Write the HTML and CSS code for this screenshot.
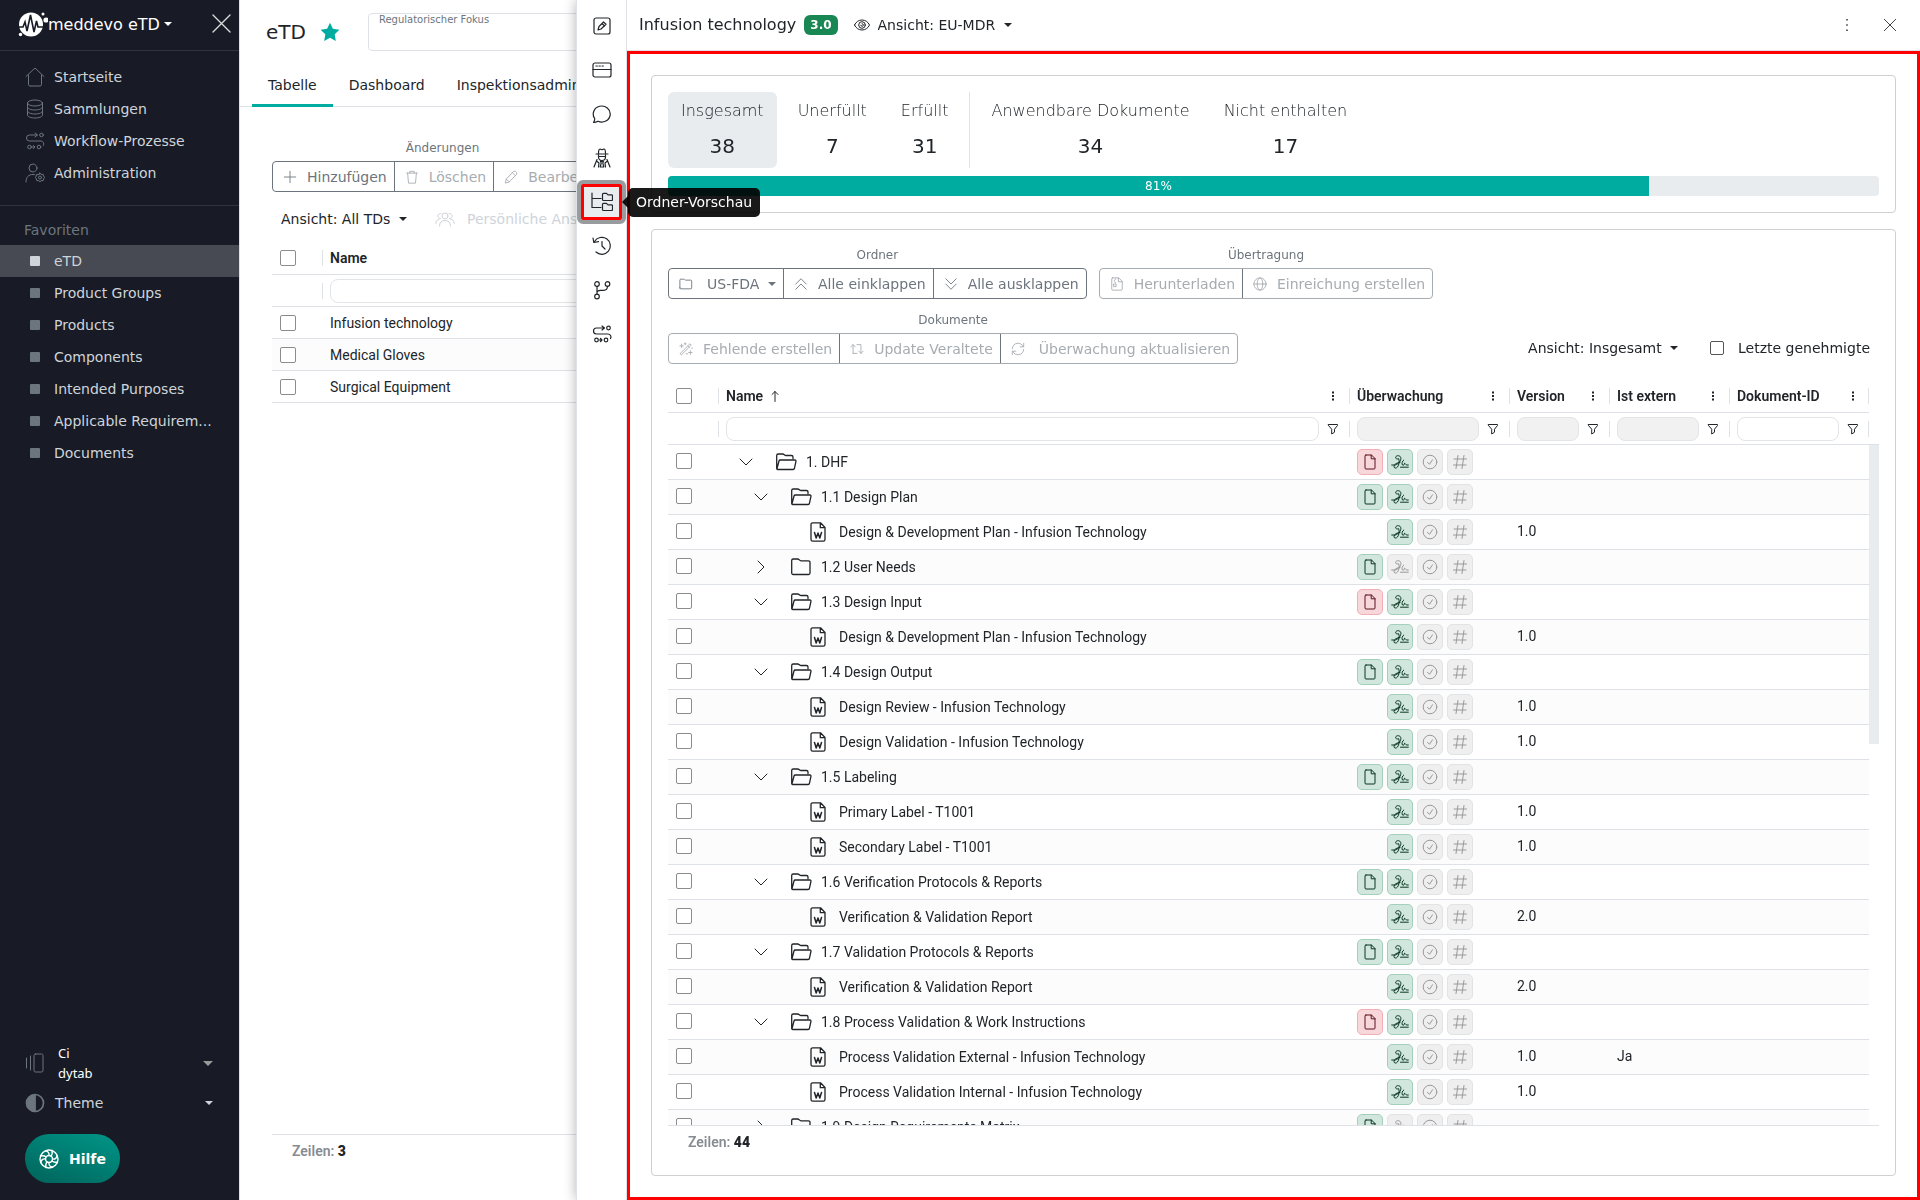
FILE: index.html
```html
<!DOCTYPE html>
<html lang="de">
<head>
    <meta charset="UTF-8">
    <meta name="viewport" content="width=device-width, initial-scale=1.0">
    <title>meddevo eTD</title>
    <link rel="stylesheet" href="styles.css">
</head>
<body>
    <!-- Icons -->
    <svg class="sprite" aria-hidden="true">
        <symbol id="home" viewBox="0 0 20 20"><path d="M1 9.500 10 1l9 8.500M3.500 8v9.500a1.500 1.500 0 0 0 1.500 1.500h10a1.500 1.500 0 0 0 1.500-1.500V8"/></symbol>
        <symbol id="database" viewBox="0 0 20 20"><ellipse cx="10" cy="4" rx="7.500" ry="3"/><path d="M2.500 4v12c0 1.700 3.400 3 7.500 3s7.500-1.300 7.500-3V4M2.500 8c0 1.700 3.400 3 7.500 3s7.500-1.300 7.500-3M2.500 12c0 1.700 3.400 3 7.500 3s7.500-1.300 7.500-3"/></symbol>
        <symbol id="flow" viewBox="0 0 20 20"><circle cx="16.500" cy="4" r="1.800"/><path d="M12 4H4.500a3 3 0 0 0 0 6H16a3 3 0 0 1 2.500 4.500M10 2l2.500 2L10 6M7 16h2.500M8.500 14.500 10 16l-1.500 1.500"/><circle cx="4.500" cy="16" r="1.800"/><circle cx="14" cy="16" r="1.800"/></symbol>
        <symbol id="admin" viewBox="0 0 20 20"><circle cx="8" cy="5" r="4"/><path d="M1 19c0-5 2.500-7.500 7-7.500 1 0 1.500.1 2 .3"/><circle cx="15" cy="14.500" r="1.500"/><path d="m15 10 1.200 1.500 2-.2.300 2L20 14.500l-1.500 1.200-.3 2-2-.2L15 19l-1.200-1.500-2 .2-.3-2-1.500-1.200 1.500-1.200.3-2 2 .2z"/></symbol>
        <symbol id="company" viewBox="0 0 20 20"><rect x="9" y="1" width="9" height="18" rx="1.500"/><path d="M5.500 3v14M1.500 5v10"/></symbol>
        <symbol id="theme" viewBox="0 0 20 20"><circle cx="10" cy="10" r="8.500" stroke-width="1.700"/><path d="M10 1.500a8.500 8.500 0 0 0 0 17z" fill="currentColor"/></symbol>
        <symbol id="help" viewBox="0 0 20 20"><circle cx="10" cy="10" r="9" stroke-width="1.400"/><circle cx="10" cy="10" r="3.500" stroke-width="1.400"/><path stroke-width="1.400" d="M6.500 2c2.500 0 4 2 3.500 4.500M13 1.500c.5 2.500 0 4.500-1 5.500M18 6.500c0 2.500-2 4-4.500 3.500M18.500 13c-2.500.5-4.500 0-5.500-1M13.500 18c-2.500 0-4-2-3.500-4.500M7 18.500c-.5-2.500 0-4.500 1-5.500M2 13.500C2 11 4 9.500 6.500 10M1.500 7c2.500-.5 4.500 0 5.500 1"/></symbol>
        <symbol id="x" viewBox="0 0 16 16"><path d="m1.500 1.500 13 13M14.500 1.500l-13 13"/></symbol>
        <symbol id="star" viewBox="0 0 20 20"><path d="m10 .800 2.900 6 6.500.900-4.700 4.600 1.100 6.600L10 15.800l-5.800 3.100 1.100-6.600L.6 7.700l6.500-.9z" fill="currentColor" stroke="none"/></symbol>
        <symbol id="plus" viewBox="0 0 16 16"><path d="M8 1.500v13M1.500 8h13"/></symbol>
        <symbol id="trash" viewBox="0 0 16 16"><path d="M2 3.500h12M5.500 3.500v-2h5v2M3 3.500 4 15h8l1-11.500"/></symbol>
        <symbol id="pencil" viewBox="0 0 16 16"><path d="m1.500 14.500 1-4 8.500-9h2l1.500 1.500v2L6 13.500zM9.500 3l3.500 3.500M2.500 10.500l3.500 3"/></symbol>
        <symbol id="people" viewBox="0 0 20 16"><circle cx="10" cy="5" r="3"/><path d="M4.500 15c0-3.500 2-5.500 5.500-5.500s5.500 2 5.500 5.500M5.500 7.500A2.500 2.500 0 1 1 6 2.600M14.500 7.500A2.500 2.500 0 1 0 14 2.600M.8 12.500C.8 10 2 8.500 4.200 8.300M19.200 12.500c0-2.500-1.200-4-3.400-4.200"/></symbol>
        <symbol id="edit" viewBox="0 0 20 20"><rect x="2" y="2" width="16" height="16" rx="2"/><path d="m6 14 1-3.500L11.500 6l2.500 2.300L9 13zM10 7.500l2.500 2.500"/></symbol>
        <symbol id="window" viewBox="0 0 20 20"><rect x="1" y="3" width="18" height="14" rx="2"/><path d="M1 9.500h18M4 6h1.300M7 6h1.300M10 6h1.300"/></symbol>
        <symbol id="chat" viewBox="0 0 20 20"><path d="M1.500 18.500c1-1.500 1.300-2.700 1.200-4A8.500 8 0 1 1 6 17.200c-1.500.8-3 1.200-4.500 1.300z"/></symbol>
        <symbol id="agent" viewBox="0 0 20 20"><path d="M4 6h12M6.500 5.500C6.500 2.500 7 1 8 1l2 .8L12 1c1 0 1.500 1.500 1.500 4.500M6.500 7v2a3.500 3.500 0 0 0 7 0V7M6.500 8.500h7M5 11.500 2 19M15 11.500 18 19M4.500 13 7 15l-.5 4M15.500 13 13 15l.5 4M8.500 13.500h3L10.800 15l1 4H8.200l1-4z"/></symbol>
        <symbol id="tree" viewBox="0 0 22 20"><path d="M1 1v14.500h9M1 6.500h9M11.500 2.500v5a1 1 0 0 0 1 1h8a1 1 0 0 0 1-1V3.800a1 1 0 0 0-1-1H17l-1.500-1.500h-3a1 1 0 0 0-1 1zM11.500 12.500v5a1 1 0 0 0 1 1h8a1 1 0 0 0 1-1v-3.700a1 1 0 0 0-1-1H17l-1.500-1.500h-3a1 1 0 0 0-1 1z"/></symbol>
        <symbol id="history" viewBox="0 0 20 20"><path d="M2.500 5.500A8.500 8.500 0 1 1 4 16M1 2l.8 4.500 4.700-.8M10 5.500V10l3 3"/></symbol>
        <symbol id="branch" viewBox="0 0 20 20"><circle cx="5" cy="4" r="2.300"/><circle cx="15.500" cy="4" r="2.300"/><circle cx="5" cy="16.500" r="2.300"/><path d="M5 6.300v8M15.500 6.300c0 3-1.500 4-4 4H8.500c-2 0-3.500.7-3.500 2.500"/></symbol>
        <symbol id="eye" viewBox="0 0 16 16"><path d="M.5 8C2 4.800 4.700 3 8 3s6 1.800 7.500 5c-1.500 3.200-4.200 5-7.500 5S2 11.200.5 8z"/><circle cx="8" cy="8" r="3.300"/><path d="M6.800 8.300A1.300 1.300 0 1 0 8 6.700"/></symbol>
        <symbol id="dots" viewBox="0 0 16 16"><path d="M7.200 1.200h1.600v1.600H7.200zM7.200 7.200h1.600v1.600H7.200zM7.200 13.200h1.600v1.600H7.200z" fill="currentColor" stroke="none"/></symbol>
        <symbol id="menu" viewBox="0 0 12 12"><path d="M5 1.500h2v2H5zM5 5h2v2H5zM5 8.500h2v2H5z" fill="currentColor" stroke="none"/></symbol>
        <symbol id="folder" viewBox="0 0 16 16"><path d="M1 12.500v-9a1 1 0 0 1 1-1h3.500a1.500 1.500 0 0 1 1 .4l1 .7h6a1 1 0 0 1 1 1v7.900a1 1 0 0 1-1 1H2a1 1 0 0 1-1-1z"/></symbol>
        <symbol id="up" viewBox="0 0 16 16"><path d="m2 8 6-6 6 6M2 14l6-6 6 6"/></symbol>
        <symbol id="down" viewBox="0 0 16 16"><path d="m2 2 6 6 6-6M2 8l6 6 6-6"/></symbol>
        <symbol id="zip" viewBox="0 0 16 16"><path d="M3 1h7l4 4v9a1 1 0 0 1-1 1H3a1 1 0 0 1-1-1V2a1 1 0 0 1 1-1zM9.500 1v4.500H14M6 2v1M5 4v1M6 6v1"/><rect x="4.500" y="8" width="2.500" height="3"/></symbol>
        <symbol id="globe" viewBox="0 0 16 16"><circle cx="8" cy="8" r="7"/><ellipse cx="8" cy="8" rx="3.200" ry="7"/><path d="M1 8h14"/></symbol>
        <symbol id="magic" viewBox="0 0 16 16"><path d="m1.500 13 11-11 1.500 1.500-11 11zM10 4.500 11.500 6M3 2.500v4M1 4.500h4M13 10v4M11 12h4M7 1v2M6 2h2M8 13.500h2M14.500 7h1"/></symbol>
        <symbol id="repeat" viewBox="0 0 16 16"><path d="M3.500 13V3M1 5.500 3.500 3 6 5.500M3.500 13H8M8 3h4.500v10M10 10.500l2.500 2.500 2.500-2.500"/></symbol>
        <symbol id="sync" viewBox="0 0 16 16"><path d="M1.500 7.500A6.500 6.500 0 0 1 14 5.500M14.500 8.500A6.500 6.500 0 0 1 2 10.500M14.500 1.500v4h-4M1.500 14.500v-4h4"/></symbol>
        <symbol id="sort" viewBox="0 0 12 12"><path d="M6 11.500V1.500M3 4.500l3-3 3 3"/></symbol>
        <symbol id="filter" viewBox="0 0 12 12"><path d="M1.500 1.500h9v1L7.500 6.200v3L4.700 11V6.200L1.500 2.500z"/></symbol>
        <symbol id="chevdown" viewBox="0 0 16 16"><path d="m2 5 6 6 6-6"/></symbol>
        <symbol id="chevright" viewBox="0 0 16 16"><path d="m5 2 6 6-6 6"/></symbol>
        <symbol id="open" viewBox="0 0 22 20"><path d="M1.700 16V3.500A1.500 1.500 0 0 1 3.200 2h4.500c1.500 0 1.800 1.500 3.300 1.500h5.500A1.500 1.500 0 0 1 18 5v1.500M1.900 17.200 4 9a1.300 1.300 0 0 1 1.300-1h14.700a1 1 0 0 1 1 1.200l-1.500 7a1.500 1.500 0 0 1-1.500 1.300H2.700a1 1 0 0 1-1-1.200"/></symbol>
        <symbol id="closed" viewBox="0 0 22 20"><path d="M1.700 16V3.500A1.500 1.500 0 0 1 3.200 2h4.500c1.500 0 1.800 1.800 3.300 1.800h7.500A1.500 1.500 0 0 1 20 5.300V16a1.500 1.500 0 0 1-1.500 1.500H3.200A1.500 1.500 0 0 1 1.700 16z"/></symbol>
        <symbol id="word" viewBox="0 0 16 20"><path d="M2.700.800h7.800L15 5.500v12a1.700 1.700 0 0 1-1.700 1.700H2.700A1.700 1.700 0 0 1 1 17.500v-15A1.700 1.700 0 0 1 2.700.800M10.300 1v4.700H15"/><path stroke-width="1.500" d="m4.500 10.500 1.700 5.500L8 11l1.800 5 1.700-5.500"/></symbol>
        <symbol id="file" viewBox="0 0 16 16"><path d="M4 1h5.500L13 4.500V14a1 1 0 0 1-1 1H4a1 1 0 0 1-1-1V2a1 1 0 0 1 1-1zM9.200 1v3.800H13"/></symbol>
        <symbol id="sign" viewBox="0 0 18 16"><path d="M.7 11h3.800c3.500-1.500 5.800-4.500 5.300-7.300C9.300 1.200 5.300 1 4.700 3.200 4.200 5 6.500 5.200 7.700 4.700 8.700 7.500 8 11 6.500 13c-1.300 1.700-3.800 1.300-3.500-.7C3.300 10 6 8.700 9 8.500M12.700 6c-1.700 1-2.200 4-1.200 5s2.200-.8 2-1.800c1 .2 1.300 1.800 2.200 1.800h1.600M9.500 13.200h7.800"/></symbol>
        <symbol id="check" viewBox="0 0 16 16"><circle cx="8" cy="8" r="6.800"/><path d="m5.500 8.300 2 2 3-4.500"/></symbol>
        <symbol id="hash" viewBox="0 0 16 16"><path d="m6 1.500-2 13M12 1.500l-2 13M2 5h12.500M1.500 11H14"/></symbol>
    </svg>

    <!-- Seitenleiste -->
    <aside class="sidebar">
        <div class="brand">
            <svg class="logo" viewBox="0 0 30 28"><circle cx="13" cy="14.500" r="12" fill="#fff"/><circle cx="28" cy="10" r="2.600" fill="#fff"/><circle cx="25" cy="4" r="1.500" fill="#fff"/><circle cx="2.500" cy="24.500" r="1.700" fill="#fff"/><path d="M1 17h4l2-5 2 9 3.500-16L16 22l2.500-11 1.500 6h8" fill="none" stroke="#181b26" stroke-width="1.600"/></svg>
            <label class="drop brand-drop"><select aria-label="Anwendung"><option>meddevo eTD</option></select></label>
            <button class="brand-close" aria-label="Menü schließen"><svg class="icon"><use href="#x"/></svg></button>
        </div>
        <nav class="menu">
            <a href="#"><svg class="icon"><use href="#home"/></svg>Startseite</a>
            <a href="#"><svg class="icon"><use href="#database"/></svg>Sammlungen</a>
            <a href="#"><svg class="icon"><use href="#flow"/></svg>Workflow-Prozesse</a>
            <a href="#"><svg class="icon"><use href="#admin"/></svg>Administration</a>
        </nav>
        <h2 class="menu-title">Favoriten</h2>
        <nav class="menu favorites">
            <a href="#" class="active"><i></i>eTD</a>
            <a href="#"><i></i>Product Groups</a>
            <a href="#"><i></i>Products</a>
            <a href="#"><i></i>Components</a>
            <a href="#"><i></i>Intended Purposes</a>
            <a href="#"><i></i>Applicable Requirem...</a>
            <a href="#"><i></i>Documents</a>
        </nav>
        <div class="side-bottom">
            <button class="account"><svg class="icon"><use href="#company"/></svg><span class="account-name">Ci<br>dytab</span><span class="caret caret-big"></span></button>
            <button class="theme"><svg class="icon"><use href="#theme"/></svg>Theme<span class="caret"></span></button>
            <button class="help"><svg class="icon"><use href="#help"/></svg>Hilfe</button>
        </div>
    </aside>

    <!-- Hauptbereich -->
    <main class="page">
        <header class="page-head">
            <h1>eTD</h1>
            <svg class="icon star"><use href="#star"/></svg>
            <div class="focus-field">
                <label for="fokus">Regulatorischer Fokus</label>
                <input type="text" id="fokus">
            </div>
        </header>
        <nav class="tabs">
            <a href="#" class="active">Tabelle</a>
            <a href="#">Dashboard</a>
            <a href="#">Inspektionsadministration</a>
        </nav>
        <div class="page-body">
            <div class="toolbar">
                <div class="group">
                    <span class="group-label">Änderungen</span>
                    <div class="buttons">
                        <button><svg class="icon"><use href="#plus"/></svg>Hinzufügen</button>
                        <button disabled><svg class="icon"><use href="#trash"/></svg>Löschen</button>
                        <button disabled><svg class="icon"><use href="#pencil"/></svg>Bearbeiten</button>
                    </div>
                </div>
            </div>
            <div class="view-row">
                <label class="drop"><select aria-label="Ansicht"><option>Ansicht: All TDs</option></select></label>
                <button class="personal" disabled><svg class="icon"><use href="#people"/></svg>Persönliche Ansicht</button>
            </div>
            <table class="grid page-grid">
                <colgroup><col class="col-check"><col></colgroup>
                <thead>
                    <tr><th><input type="checkbox" aria-label="Alle auswählen"></th><th class="sep">Name</th></tr>
                    <tr class="filters"><td></td><td class="sep"><input type="text" class="filter" aria-label="Name filtern"></td></tr>
                </thead>
                <tbody>
                    <tr><td><input type="checkbox" aria-label="Infusion technology"></td><td>Infusion technology</td></tr>
                    <tr><td><input type="checkbox" aria-label="Medical Gloves"></td><td>Medical Gloves</td></tr>
                    <tr><td><input type="checkbox" aria-label="Surgical Equipment"></td><td>Surgical Equipment</td></tr>
                </tbody>
            </table>
            <div class="row-count">Zeilen: <b>3</b></div>
        </div>
    </main>

    <!-- Detailbereich -->
    <section class="panel">
        <nav class="rail">
            <button aria-label="Bearbeiten"><svg class="icon"><use href="#edit"/></svg></button>
            <button aria-label="Formular"><svg class="icon"><use href="#window"/></svg></button>
            <button aria-label="Kommentare"><svg class="icon"><use href="#chat"/></svg></button>
            <button aria-label="Inspektion"><svg class="icon"><use href="#agent"/></svg></button>
            <button class="active" aria-label="Ordner-Vorschau"><svg class="icon"><use href="#tree"/></svg></button>
            <button aria-label="Verlauf"><svg class="icon"><use href="#history"/></svg></button>
            <button aria-label="Versionen"><svg class="icon"><use href="#branch"/></svg></button>
            <button aria-label="Workflow"><svg class="icon"><use href="#flow"/></svg></button>
            <span class="tooltip">Ordner-Vorschau</span>
        </nav>
        <div class="detail">
            <header class="detail-head">
                <h2>Infusion technology</h2>
                <span class="version">3.0</span>
                <svg class="icon eye"><use href="#eye"/></svg>
                <label class="drop"><select aria-label="Ansicht"><option>Ansicht: EU-MDR</option></select></label>
                <button class="head-btn push" aria-label="Mehr"><svg class="icon"><use href="#dots"/></svg></button>
                <button class="head-btn" aria-label="Schließen"><svg class="icon"><use href="#x"/></svg></button>
            </header>
            <div class="frame">
                <div class="card">
                    <div class="stats">
                        <button class="stat active"><span>Insgesamt</span><b>38</b></button>
                        <button class="stat"><span>Unerfüllt</span><b>7</b></button>
                        <button class="stat"><span>Erfüllt</span><b>31</b></button>
                        <hr>
                        <button class="stat"><span>Anwendbare Dokumente</span><b>34</b></button>
                        <button class="stat"><span>Nicht enthalten</span><b>17</b></button>
                    </div>
                    <div class="progress"><div class="bar" style="width: 81%">81%</div></div>
                </div>

                <div class="card card-grid">
                    <div class="toolbar">
                        <div class="group">
                            <span class="group-label">Ordner</span>
                            <div class="buttons">
                                <label class="drop"><svg class="icon"><use href="#folder"/></svg><select aria-label="Ordner"><option>US-FDA</option></select></label>
                                <button><svg class="icon"><use href="#up"/></svg>Alle einklappen</button>
                                <button><svg class="icon"><use href="#down"/></svg>Alle ausklappen</button>
                            </div>
                        </div>
                        <div class="group">
                            <span class="group-label">Übertragung</span>
                            <div class="buttons off">
                                <button disabled><svg class="icon"><use href="#zip"/></svg>Herunterladen</button>
                                <button disabled><svg class="icon"><use href="#globe"/></svg>Einreichung erstellen</button>
                            </div>
                        </div>
                    </div>
                    <div class="toolbar">
                        <div class="group">
                            <span class="group-label">Dokumente</span>
                            <div class="buttons off">
                                <button disabled><svg class="icon"><use href="#magic"/></svg>Fehlende erstellen</button>
                                <button disabled><svg class="icon"><use href="#repeat"/></svg>Update Veraltete</button>
                                <button disabled class="wide"><svg class="icon"><use href="#sync"/></svg>Überwachung aktualisieren</button>
                            </div>
                        </div>
                        <div class="options">
                            <label class="drop"><select aria-label="Ansicht"><option>Ansicht: Insgesamt</option></select></label>
                            <label class="approved"><input type="checkbox">Letzte genehmigte</label>
                        </div>
                    </div>
                    <div class="grid-view">
                        <table class="grid folder-grid">
                            <colgroup><col class="col-check"><col><col class="col-watch"><col class="col-version"><col class="col-extern"><col class="col-id"></colgroup>
                            <thead>
                                <tr>
                                    <th><input type="checkbox" aria-label="Alle auswählen"></th>
                                    <th class="sep"><div class="head">Name <svg class="icon sort"><use href="#sort"/></svg><svg class="icon"><use href="#menu"/></svg></div></th>
                                    <th class="sep"><div class="head">Überwachung<svg class="icon"><use href="#menu"/></svg></div></th>
                                    <th class="sep"><div class="head">Version<svg class="icon"><use href="#menu"/></svg></div></th>
                                    <th class="sep"><div class="head">Ist extern<svg class="icon"><use href="#menu"/></svg></div></th>
                                    <th class="sep last"><div class="head">Dokument-ID<svg class="icon"><use href="#menu"/></svg></div></th>
                                </tr>
                                <tr class="filters">
                                    <td></td>
                                    <td class="sep"><div class="head"><input type="text" class="filter" aria-label="Name filtern"><svg class="icon"><use href="#filter"/></svg></div></td>
                                    <td class="sep"><div class="head"><input type="text" class="filter" aria-label="Überwachung filtern" disabled><svg class="icon"><use href="#filter"/></svg></div></td>
                                    <td class="sep"><div class="head"><input type="text" class="filter" aria-label="Version filtern" disabled><svg class="icon"><use href="#filter"/></svg></div></td>
                                    <td class="sep"><div class="head"><input type="text" class="filter" aria-label="Ist extern filtern" disabled><svg class="icon"><use href="#filter"/></svg></div></td>
                                    <td class="sep last"><div class="head"><input type="text" class="filter" aria-label="Dokument-ID filtern"><svg class="icon"><use href="#filter"/></svg></div></td>
                                </tr>
                            </thead>
                            <tbody id="rows"></tbody>
                        </table>
                        <div class="scrollbar"><div class="thumb"></div></div>
                    </div>
                    <div class="row-count">Zeilen: <b>44</b></div>
                </div>
            </div>
        </div>
    </section>

    <script>
        // Typ, Name, Datei-Status, Signatur-Status, Version, extern
        let daten = [
            ["root", "1. DHF", "red", "green"],
            ["open", "1.1 Design Plan", "green", "green"],
            ["doc", "Design & Development Plan - Infusion Technology", "", "green", "1.0"],
            ["closed", "1.2 User Needs", "green", "gray"],
            ["open", "1.3 Design Input", "red", "green"],
            ["doc", "Design & Development Plan - Infusion Technology", "", "green", "1.0"],
            ["open", "1.4 Design Output", "green", "green"],
            ["doc", "Design Review - Infusion Technology", "", "green", "1.0"],
            ["doc", "Design Validation - Infusion Technology", "", "green", "1.0"],
            ["open", "1.5 Labeling", "green", "green"],
            ["doc", "Primary Label - T1001", "", "green", "1.0"],
            ["doc", "Secondary Label - T1001", "", "green", "1.0"],
            ["open", "1.6 Verification Protocols & Reports", "green", "green"],
            ["doc", "Verification & Validation Report", "", "green", "2.0"],
            ["open", "1.7 Validation Protocols & Reports", "green", "green"],
            ["doc", "Verification & Validation Report", "", "green", "2.0"],
            ["open", "1.8 Process Validation & Work Instructions", "red", "green"],
            ["doc", "Process Validation External - Infusion Technology", "", "green", "1.0", "Ja"],
            ["doc", "Process Validation Internal - Infusion Technology", "", "green", "1.0"],
            ["closed", "1.9 Design Requirements Matrix", "green", "gray"]
        ];

        function icon(id, klasse) {
            return '<svg class="icon ' + klasse + '"><use href="#' + id + '"/></svg>';
        }

        function badge(id, farbe) {
            return '<span class="badge ' + farbe + '">' + icon(id, "") + '</span>';
        }

        let html = "";
        for (let [typ, name, datei, signatur, version, extern] of daten) {
            let text = name.replace(/&/g, "&amp;");
            let symbole = "";
            if (typ === "doc") {
                symbole = icon("word", "word");
            } else {
                symbole = icon(typ === "closed" ? "chevright" : "chevdown", "chevron") + icon(typ === "closed" ? "closed" : "open", "folder");
            }
            html += '<tr><td><input type="checkbox" aria-label="' + text + '"></td>'
                + '<td><div class="node ' + typ + '">' + symbole + '<span>' + text + '</span></div></td>'
                + '<td><div class="badges">' + badge("file", datei || "empty") + badge("sign", signatur) + badge("check", "gray") + badge("hash", "gray") + '</div></td>'
                + '<td>' + (version || "") + '</td><td>' + (extern || "") + '</td><td></td></tr>';
        }
        document.getElementById("rows").innerHTML = html;
    </script>
</body>
</html>
```
FILE: styles.css
```css
* {
    box-sizing: border-box;
}

body {
    margin: 0;
    display: flex;
    height: 100vh;
    overflow: hidden;
    background-color: #fff;
    color: #212529;
    font-family: "DejaVu Sans", sans-serif;
    font-size: 14px;
    line-height: 20px;
    white-space: nowrap;
}

h1, h2 {
    margin: 0;
    font-weight: normal;
}

a {
    color: inherit;
    text-decoration: none;
}

button, select, input {
    font: inherit;
    color: inherit;
    margin: 0;
}

button {
    padding: 0;
    border: none;
    background: none;
    cursor: pointer;
}

/* Icons */
.sprite {
    position: absolute;
    width: 0;
    height: 0;
}

.icon {
    width: 16px;
    height: 16px;
    flex: none;
    fill: none;
    stroke: currentColor;
    stroke-width: 1;
    stroke-linecap: round;
    stroke-linejoin: round;
}

/* Auswahlfelder */
.drop {
    display: inline-flex;
    align-items: center;
    gap: 8px;
}

.drop select {
    appearance: none;
    border: none;
    padding: 0;
    background: none;
    opacity: 1;
}

.drop::after,
.caret {
    content: "";
    border: 4px solid transparent;
    border-top-color: currentColor;
    border-bottom: none;
}

.caret-big {
    border-width: 5px;
    border-bottom: none;
    color: #999;
}

input[type="checkbox"] {
    appearance: none;
    display: block;
    width: 16px;
    height: 16px;
    border: 1px solid #8c8c8c;
    border-radius: 2px;
    background-color: #fff;
}

/* Seitenleiste */
.sidebar {
    display: flex;
    flex-direction: column;
    flex: none;
    width: 240px;
    border-right: 1px solid #dee2e6;
    background-color: #181b26;
    color: #ced4da;
}

.brand {
    display: flex;
    align-items: center;
    height: 51px;
    padding: 0 7px 3px 18px;
    border-bottom: 1px solid #31343e;
}

.logo {
    width: 30px;
    height: 28px;
}

.brand-drop {
    gap: 4px;
    color: #fff;
    font-size: 16px;
}

.brand-drop select {
    padding-top: 2px;
}

.brand-close {
    display: flex;
    margin-left: auto;
    color: #ddd;
}

.brand-close .icon {
    width: 21px;
    height: 21px;
}

.menu {
    padding: 10px 0 16px;
    border-bottom: 1px solid #31343e;
}

.menu a {
    display: flex;
    align-items: center;
    gap: 9px;
    height: 32px;
    padding-left: 25px;
}

.menu .icon,
.side-bottom .icon {
    width: 20px;
    height: 20px;
    color: #6c757d;
}

.menu-title {
    padding: 14px 24px 5px;
    font-size: 14px;
    color: #6c757d;
}

.favorites {
    padding: 0;
    border: none;
}

.favorites i {
    width: 10px;
    height: 10px;
    margin: 0 5px;
    border-radius: 1px;
    background-color: #6c757d;
}

.favorites .active {
    background-color: #474a52;
}

.favorites .active i {
    background-color: #ced4da;
}

.side-bottom {
    display: flex;
    flex-direction: column;
    align-items: stretch;
    margin-top: auto;
    padding: 0 26px 17px 25px;
}

.side-bottom button {
    display: flex;
    align-items: center;
}

.side-bottom .caret {
    margin-left: auto;
}

.account {
    gap: 13px;
    color: #fff;
    text-align: left;
}

.account-name {
    font-family: "Noto Sans", sans-serif;
    font-size: 13px;
}

.theme {
    gap: 10px;
    margin: 10px 0 21px;
}

.side-bottom .help {
    align-self: flex-start;
    gap: 10px;
    height: 49px;
    padding: 0 14px;
    border-radius: 25px;
    background: linear-gradient(20deg, #00635a, #009688);
    color: #fff;
    font-weight: bold;
}

.side-bottom .help .icon {
    color: #fff;
}

/* Hauptbereich */
.page {
    display: flex;
    flex-direction: column;
    flex: 1;
    min-width: 0;
    overflow: hidden;
}

.page-head {
    display: flex;
    align-items: center;
    height: 64px;
    padding: 0 26px;
}

.page-head h1 {
    font-size: 20px;
}

.star {
    width: 20px;
    height: 20px;
    margin: 0 28px 0 14px;
    color: #00aca0;
}

.focus-field {
    display: flex;
    flex-direction: column;
    flex: 1;
    height: 38px;
    padding: 0 10px;
    border: 1px solid #dee2e6;
    border-radius: 4px;
}

.focus-field label {
    font-size: 10px;
    line-height: 12px;
    color: #6c757d;
}

.focus-field input {
    min-height: 0;
    border: none;
    background: none;
}

.tabs {
    display: flex;
    padding-left: 12px;
    border-bottom: 1px solid #dee2e6;
}

.tabs a {
    height: 43px;
    margin-bottom: -1px;
    padding: 11px 16px 0;
    border-bottom: 3px solid transparent;
}

.tabs .active {
    border-color: #00aca0;
}

.page-body {
    display: flex;
    flex-direction: column;
    flex: 1;
    padding: 32px;
}

/* Werkzeugleiste */
.toolbar {
    display: flex;
    align-items: flex-end;
    gap: 12px;
}

.group {
    display: flex;
    flex-direction: column;
    gap: 4px;
    color: #6c757d;
    text-align: center;
}

.group-label {
    font-size: 12px;
    line-height: 18px;
}

.buttons {
    display: flex;
    height: 31px;
    border: 1px solid #6c757d;
    border-radius: 4px;
}

.buttons.off {
    border-color: #a7acb1;
}

.buttons > * {
    display: flex;
    align-items: center;
    gap: 10px;
    padding: 0 7px 0 10px;
}

.buttons .icon {
    width: 14px;
}

.buttons > * + * {
    border-left: 1px solid #6c757d;
}

.buttons > :disabled {
    color: #a7acb1;
}

.buttons .drop {
    gap: 8px;
}

.buttons .drop select {
    margin-left: 6px;
}

.buttons .wide {
    gap: 14px;
}

.view-row {
    display: flex;
    align-items: center;
    gap: 28px;
    height: 32px;
    margin: 11px 0 7px 9px;
}

.personal {
    display: flex;
    align-items: center;
    gap: 12px;
    color: #ced4da;
}

.personal .icon {
    width: 20px;
}

/* Tabellen */
.grid {
    width: 100%;
    border-collapse: separate;
    border-spacing: 0;
    table-layout: fixed;
    font-family: Roboto, sans-serif;
}

.grid th,
.grid td {
    height: 32px;
    padding: 0 8px;
    border-bottom: 1px solid #dee2e6;
    text-align: left;
}

.grid th {
    height: 33px;
    font-weight: 600;
}

.grid tbody tr:nth-child(even) {
    background-color: #fcfcfc;
}

.grid .sep {
    padding-right: 10px;
    background: linear-gradient(#dee2e6, #dee2e6) no-repeat left center / 1px 16px;
}

.grid .last {
    background: linear-gradient(#dee2e6, #dee2e6) no-repeat left center / 1px 16px,
        linear-gradient(#dee2e6, #dee2e6) no-repeat right center / 1px 16px;
}

.filter {
    display: block;
    width: 100%;
    min-width: 0;
    height: 24px;
    border: 1px solid #e2e4e8;
    border-radius: 8px;
    background-color: #fff;
}

.filter:disabled {
    background-color: #f1f1f1;
}

.head {
    display: flex;
    align-items: center;
    justify-content: space-between;
    gap: 8px;
}

.head .icon {
    width: 12px;
    height: 12px;
}

.head .sort {
    margin: 0 auto 0 -2px;
}

.col-check { width: 50px; }
.col-watch { width: 160px; }
.col-version { width: 100px; }
.col-extern { width: 120px; }
.col-id { width: 140px; }

.row-count {
    height: 34px;
    padding-left: 20px;
    border-top: 1px solid #dee2e6;
    color: #868c92;
    font-family: Roboto, sans-serif;
    font-weight: 600;
    line-height: 32px;
}

.row-count b {
    color: #212529;
}

.page-grid + .row-count {
    margin-top: auto;
}

/* Detailbereich */
.panel {
    position: fixed;
    top: 0;
    right: 0;
    bottom: 0;
    display: flex;
    width: 70vw;
    border-left: 1px solid #dee2e6;
    background-color: #fff;
    box-shadow: 0 0 12px rgba(0, 0, 0, 0.3);
}

.rail {
    position: relative;
    display: flex;
    flex-direction: column;
    width: 50px;
    padding-top: 4px;
    border-right: 1px solid #dee2e6;
}

.rail button {
    display: flex;
    align-items: center;
    justify-content: center;
    height: 44px;
}

.rail .icon {
    width: 20px;
    height: 20px;
    stroke-width: 1.2;
}

.rail .active {
    border: 4px solid #999c9f;
    border-radius: 6px;
    outline: 3px solid #f00;
    outline-offset: -7px;
    background-color: #e9ecef;
}

.rail .active .icon {
    width: 22px;
}

.tooltip {
    position: absolute;
    top: 188px;
    left: 51px;
    z-index: 1;
    padding: 4px 8px 5px;
    border-radius: 5px;
    background-color: rgba(0, 0, 0, 0.9);
    color: #fff;
}

.tooltip::before {
    content: "";
    position: absolute;
    top: 8px;
    right: 100%;
    border: 6px solid transparent;
    border-right-color: rgba(0, 0, 0, 0.9);
    border-left: none;
}

.detail {
    display: flex;
    flex-direction: column;
    flex: 1;
    min-width: 0;
}

.detail-head {
    display: flex;
    align-items: center;
    height: 51px;
    padding: 0 23px 0 12px;
    border-bottom: 1px solid #dee2e6;
}

.detail-head h2 {
    font-size: 16px;
}

.version {
    margin: 0 16px 0 8px;
    padding: 0 6px;
    border-radius: 6px;
    background-color: #198754;
    color: #fff;
    font-size: 12px;
    font-weight: bold;
}

.eye {
    margin-right: 8px;
}

.head-btn {
    display: flex;
    margin-left: 29px;
}

.head-btn.push {
    margin-left: auto;
}

.head-btn .icon {
    width: 14px;
    height: 14px;
}

.frame {
    display: flex;
    flex-direction: column;
    flex: 1;
    min-height: 0;
    gap: 16px;
    padding: 21px;
    border: 3px solid #f00;
}

.card {
    padding: 16px;
    border: 1px solid #ced0d2;
    border-radius: 4px;
}

.card-grid {
    display: flex;
    flex-direction: column;
    flex: 1;
    min-height: 0;
    gap: 12px;
}

/* Kennzahlen */
.stats {
    display: flex;
    gap: 8px;
    margin-bottom: 8px;
}

.stats hr {
    width: 1px;
    margin: 0;
    border: none;
    background-color: #dee2e6;
}

.stat {
    display: flex;
    flex-direction: column;
    align-items: center;
    gap: 9px;
    padding: 9px 13px 6px;
    border-radius: 6px;
    font-size: 16px;
    font-weight: 300;
}

.stat b {
    font-size: 20px;
    line-height: 32px;
    font-weight: normal;
}

.stat.active {
    background-color: #e9ecef;
}

.progress {
    height: 20px;
    border-radius: 4px;
    background-color: #e9ecef;
    overflow: hidden;
}

.bar {
    height: 100%;
    background-color: #00aca0;
    color: #fff;
    font-size: 12px;
    text-align: center;
}

.options {
    display: flex;
    align-items: center;
    gap: 32px;
    height: 32px;
    margin-left: auto;
    padding-right: 9px;
}

.approved {
    display: flex;
    align-items: center;
    gap: 14px;
}

.approved input[type="checkbox"] {
    width: 14px;
    height: 14px;
    border-color: #555;
}

/* Ordnerstruktur */
.grid-view {
    position: relative;
    flex: 1;
    min-height: 0;
    margin-top: 4px;
    padding-right: 10px;
    overflow: hidden;
}

.card-grid .row-count {
    margin-top: -12px;
}

.folder-grid tbody td {
    height: 35px;
    padding-bottom: 2px;
}

.folder-grid tbody td:nth-child(2),
.folder-grid tbody td:nth-child(3) {
    padding-bottom: 0;
}

.node {
    display: flex;
    align-items: center;
    padding-left: 12px;
}

.node .chevron {
    margin-right: 21px;
}

.node .folder {
    width: 22px;
    height: 20px;
    margin-right: 9px;
    stroke-width: 1.3;
}

.node .word {
    height: 20px;
    margin-right: 13px;
    stroke-width: 1.3;
}

.node.open,
.node.closed {
    padding-left: 27px;
}

.node.doc {
    padding-left: 84px;
}

.badges {
    display: flex;
    gap: 4px;
}

.badge {
    display: flex;
    align-items: center;
    justify-content: center;
    width: 26px;
    height: 26px;
    border: 1px solid;
    border-radius: 5px;
}

.badge .icon {
    width: 18px;
}

.badge.green {
    border-color: #a3cfbb;
    background-color: #d1e7dd;
    color: #0a3622;
}

.badge.red {
    border-color: #f1aeb5;
    background-color: #f8d7da;
    color: #58151c;
}

.badge.gray {
    border-color: #e2e3e5;
    background-color: #efeff0;
    color: #999;
}

.badge.empty {
    visibility: hidden;
}

.scrollbar {
    position: absolute;
    top: 64px;
    right: 0;
    bottom: 0;
    width: 10px;
    border-top: 1px solid #dee2e6;
}

.thumb {
    height: 44%;
    background-color: #e9ecef;
}
```
